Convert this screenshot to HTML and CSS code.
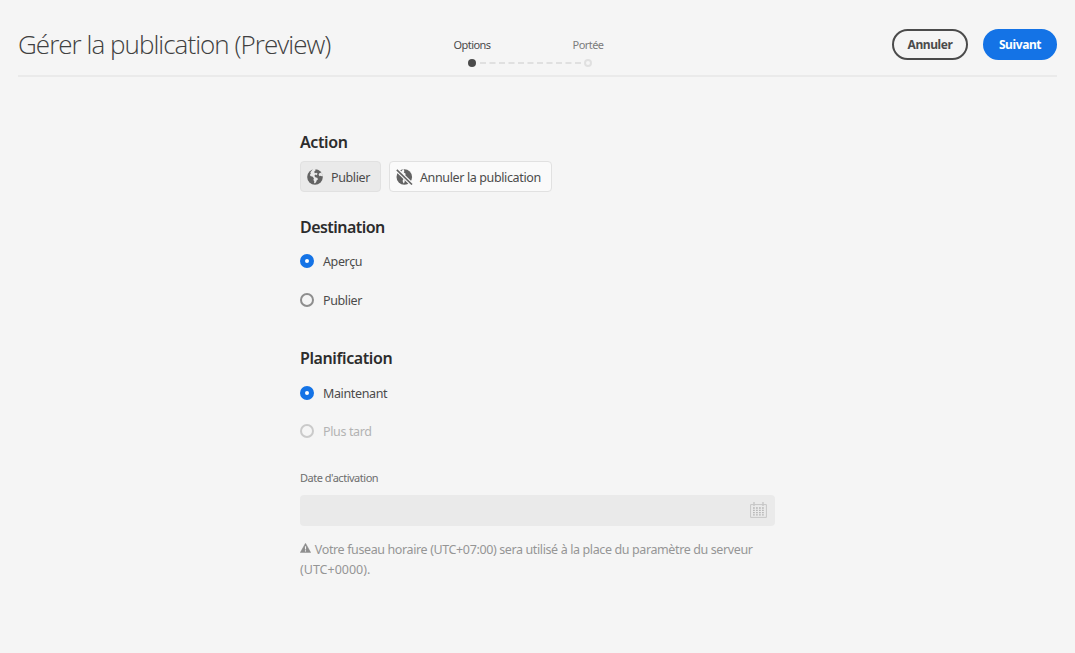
FILE: index.html
```html
<!DOCTYPE html>
<html lang="fr">
<head>
<meta charset="utf-8">
<title>Gérer la publication (Preview)</title>
<link rel="stylesheet" href="styles.css">
</head>
<body>
<header class="header">
  <h1 class="title">Gérer la publication (Preview)</h1>
  <div class="steps">
    <div class="step step-current"><span class="step-label">Options</span><span class="step-dot"></span></div>
    <svg class="step-line" width="101" height="2" viewBox="0 0 101 2"><path d="M0 1H101" stroke="#e0e0e0" stroke-width="2" stroke-dasharray="6 3.5"/></svg>
    <div class="step"><span class="step-label">Portée</span><span class="step-dot"></span></div>
  </div>
  <div class="actions">
    <button class="btn btn-outline">Annuler</button>
    <button class="btn btn-primary">Suivant</button>
  </div>
</header>
<main class="content">
  <h2 class="heading">Action</h2>
  <div class="toggles">
    <button class="toggle toggle-selected">
      <svg class="icon" width="16" height="16" viewBox="0 0 16 16"><circle cx="8" cy="8" r="7.8" fill="#636363"/><path class="land" d="M6 0 4.6 1.8 3.4 3.2 3.8 4.6 2.8 6 3.8 7.3 5.4 7.6 6.9 9.2 6.4 11 7.3 12.2 7 13.5 7.8 14.6 9.2 13 9.6 11.4 11 10.2 10.2 8.8 8.7 8.4 7.4 7 8.2 5.6 9.5 6.2 10.6 4.8 9.4 3.7 7.8 4.2 7.2 2.7 8.6 1.3 8.4 0ZM12.3 4.3 14.3 3.4 16 6.2 15.2 7.6 13.7 6.8 12.6 7.2 11.6 5.8Z"/></svg>
      <span class="text">Publier</span>
    </button>
    <button class="toggle">
      <svg class="icon" width="17" height="16" viewBox="0 0 17 16"><circle cx="8.3" cy="8" r="7.8" fill="#636363"/><path class="cut" d="M7.5 .1 8.4 2 7.8 3.4 9.4 4.6 9.8 5.6 8.4 6.2 6 3.8 5 2.6ZM5.8 8.8 7.2 10 6.6 12 7.6 14.6 8.6 13.2 8.8 11.3Z"/><path d="M-.5 -.5 17 16.5" stroke="#fafafa" stroke-width="4"/><path d="M.8 .8 16 15.5" stroke="#636363" stroke-width="1.6"/></svg>
      <span class="text">Annuler la publication</span>
    </button>
  </div>
  <h2 class="heading heading-tight">Destination</h2>
  <div class="radios">
    <label class="radio radio-on"><span class="ring"></span><span class="text">Aperçu</span></label>
    <label class="radio"><span class="ring"></span><span class="text">Publier</span></label>
  </div>
  <h2 class="heading heading-plan">Planification</h2>
  <div class="radios">
    <label class="radio radio-on"><span class="ring"></span><span class="text">Maintenant</span></label>
    <label class="radio radio-off"><span class="ring"></span><span class="text">Plus tard</span></label>
  </div>
  <div class="field-label">Date d'activation</div>
  <div class="field">
    <svg class="calendar" width="17" height="16" viewBox="0 0 17 16"><path d="M4 0v4M13 0v4" stroke="#c6c6c6" stroke-width="1.4"/><path d="M.6 2.6H16.4V15.4H.6Z" fill="none" stroke="#c6c6c6"/><path d="M3 6H14M3 8.3H14M3 10.6H14M3 12.9H14" stroke="#b8b8b8" stroke-width="1.3" stroke-dasharray="1.8 1.2"/></svg>
  </div>
  <p class="hint"><svg class="warn" width="11" height="10" viewBox="0 0 11 10"><path d="M5.5 .3 10.7 9.6H.3Z" fill="#8e8e8e" stroke="#8e8e8e" stroke-width=".5" stroke-linejoin="round"/><path d="M5.5 3.2V6.4M5.5 7.3V8.5" stroke="#f5f5f5" stroke-width="1.1"/></svg> Votre fuseau horaire (UTC+07:00) sera utilisé à la place du paramètre du serveur <br><span class="zone">(UTC+0000).</span></p>
</main>
</body>
</html>
```
FILE: styles.css
```css
* { box-sizing: border-box; }
body {
  margin: 0;
  width: 1075px;
  height: 653px;
  overflow: hidden;
  background: #f5f5f5;
  color: #4b4b4b;
  font: 12.5px/20px "Noto Sans", sans-serif;
  letter-spacing: -0.37px;
}
button { font: inherit; color: inherit; letter-spacing: inherit; margin: 0; }
.header {
  display: grid;
  grid-template-columns: 435px 1fr auto;
  height: 77px;
  margin: 0 18px;
  border-bottom: 2px solid #eaeaea;
}
.title {
  margin: 26px 0 0;
  font: 300 26px/36px "Open Sans", sans-serif;
  letter-spacing: -0.97px;
  white-space: nowrap;
  color: #404040;
}
.steps { display: flex; align-items: flex-start; padding-top: 36px; }
.step {
  display: flex;
  flex-direction: column;
  align-items: center;
  width: 38px;
  margin-right: -11px;
  color: #7c7c7c;
}
.step-current { color: #4b4b4b; }
.step-label { font-size: 11px; line-height: 18px; letter-spacing: -0.55px; white-space: nowrap; }
.step-dot { width: 8px; height: 8px; margin-top: 5px; border: 2px solid #e0e0e0; border-radius: 50%; }
.step-current .step-dot { border: 0; background: #4b4b4b; }
.step-line { margin: 26px -12px 0 0; }
.actions { display: flex; gap: 15px; padding-top: 29px; }
.btn {
  height: 31px;
  padding: 0;
  border: 2px solid #4b4b4b;
  border-radius: 16px;
  background: transparent;
  font-size: 12px;
  font-weight: 700;
  letter-spacing: -0.4px;
}
.btn-outline { width: 76px; }
.btn-primary { width: 74px; border-color: #1473e6; background: #1473e6; color: #fff; }
.content { width: 475px; margin-left: 300px; padding-top: 54px; }
.heading { margin: 0; font-size: 16px; font-weight: 600; line-height: 22px; letter-spacing: -0.4px; color: #2c2c2c; }
.heading-tight { letter-spacing: -0.55px; }
.toggles { display: flex; gap: 8px; margin: 8px 0 24px; }
.toggle {
  display: flex;
  align-items: center;
  gap: 7px;
  width: 163px;
  height: 31px;
  padding: 0 0 0 6px;
  border: 1px solid #e1e1e1;
  border-radius: 4px;
  background: #fafafa;
  white-space: nowrap;
}
.toggle-selected { gap: 8px; width: 81px; background: #eaeaea; }
.icon { flex: none; }
.text { padding-top: 2px; }
.land { fill: #eaeaea; }
.cut { fill: #fafafa; }
.radios { display: flex; flex-direction: column; gap: 19px; margin-top: 13px; }
.radio { display: flex; align-items: center; gap: 9px; height: 20px; }
.ring { width: 14px; height: 14px; border: 2px solid #8e8e8e; border-radius: 50%; }
.radio-on .ring { border: 5px solid #1473e6; background: #fff; }
.radio-off { color: #b3b3b3; }
.radio-off .ring { border-color: #cacaca; }
.heading-plan { margin-top: 37px; }
.heading-plan + .radios { margin-top: 14px; gap: 18px; }
.field-label { margin-top: 28px; font-size: 11px; line-height: 18px; color: #6e6e6e; letter-spacing: -0.48px; }
.field {
  display: flex;
  align-items: center;
  justify-content: flex-end;
  height: 31px;
  margin-top: 8px;
  padding: 0 8px 2px 0;
  border-radius: 4px;
  background: #eaeaea;
}
.hint { margin: 14px 0 0; color: #959595; white-space: nowrap; letter-spacing: -0.38px; }
.zone { letter-spacing: 0; }
.warn { margin-right: 1px; vertical-align: 1px; }
```
